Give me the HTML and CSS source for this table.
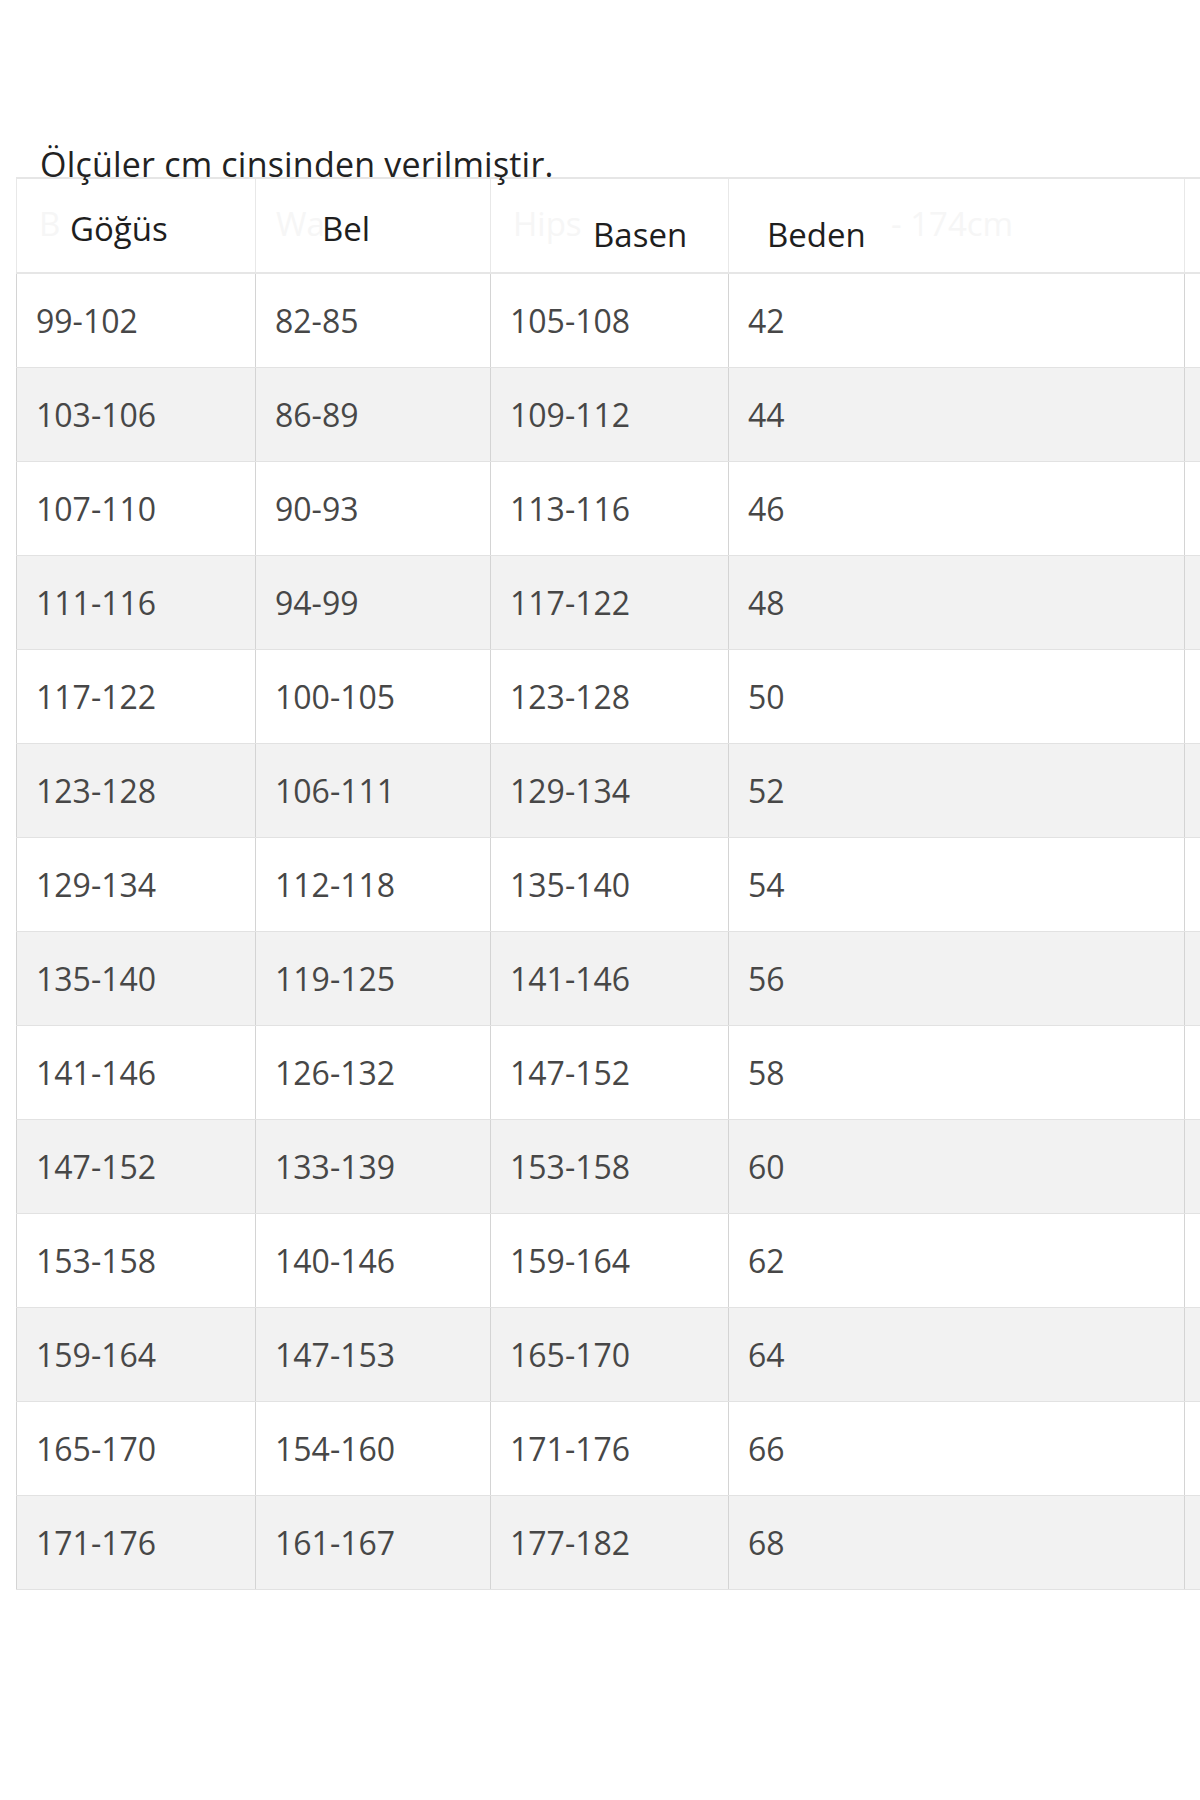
FILE: index.html
```html
<!DOCTYPE html>
<html lang="tr">
<head>
<meta charset="utf-8">
<title>Beden Tablosu</title>
<link rel="stylesheet" href="styles.css">
</head>
<body>
<div class="page">
  <p class="note">Ölçüler cm cinsinden verilmiştir.</p>
  <div class="table-wrap">
    <table class="size-table">
      <colgroup>
        <col class="c1"><col class="c2"><col class="c3"><col class="c4"><col class="c5">
      </colgroup>
      <thead>
        <tr>
          <th class="h1"><span class="ghost g1">B</span><span class="lbl">Göğüs</span></th>
          <th class="h2"><span class="ghost g2">Wa</span><span class="lbl">Bel</span></th>
          <th class="h3"><span class="ghost g3">Hips</span><span class="lbl">Basen</span></th>
          <th class="h4"><span class="lbl">Beden</span><span class="ghost g5">- 174cm</span></th>
          <th></th>
        </tr>
      </thead>
      <tbody>
        <tr><td>99-102</td><td>82-85</td><td>105-108</td><td>42</td><td></td></tr>
        <tr><td>103-106</td><td>86-89</td><td>109-112</td><td>44</td><td></td></tr>
        <tr><td>107-110</td><td>90-93</td><td>113-116</td><td>46</td><td></td></tr>
        <tr><td>111-116</td><td>94-99</td><td>117-122</td><td>48</td><td></td></tr>
        <tr><td>117-122</td><td>100-105</td><td>123-128</td><td>50</td><td></td></tr>
        <tr><td>123-128</td><td>106-111</td><td>129-134</td><td>52</td><td></td></tr>
        <tr><td>129-134</td><td>112-118</td><td>135-140</td><td>54</td><td></td></tr>
        <tr><td>135-140</td><td>119-125</td><td>141-146</td><td>56</td><td></td></tr>
        <tr><td>141-146</td><td>126-132</td><td>147-152</td><td>58</td><td></td></tr>
        <tr><td>147-152</td><td>133-139</td><td>153-158</td><td>60</td><td></td></tr>
        <tr><td>153-158</td><td>140-146</td><td>159-164</td><td>62</td><td></td></tr>
        <tr><td>159-164</td><td>147-153</td><td>165-170</td><td>64</td><td></td></tr>
        <tr><td>165-170</td><td>154-160</td><td>171-176</td><td>66</td><td></td></tr>
        <tr><td>171-176</td><td>161-167</td><td>177-182</td><td>68</td><td></td></tr>
      </tbody>
    </table>
  </div>
</div>
</body>
</html>
```

FILE: styles.css
```css
html, body {
  margin: 0;
  padding: 0;
  background: #ffffff;
}

body {
  font-family: "Open Sans", "Liberation Sans", sans-serif;
  overflow-x: hidden;
}

.page {
  padding-top: 141px;
  width: 1200px;
  overflow: hidden;
}

.note {
  margin: 0 0 0 40px;
  font-size: 34px;
  line-height: 46px;
  color: #222222;
  position: relative;
  z-index: 1;
  letter-spacing: 0.2px;
}

.table-wrap {
  margin-top: -10px;
  margin-left: 16px;
  width: 1184px;
  overflow: hidden;
}

.size-table {
  border-collapse: collapse;
  table-layout: fixed;
  width: 1400px;
}

.c1 { width: 239px; }
.c2 { width: 235px; }
.c3 { width: 238px; }
.c4 { width: 456px; }
.c5 { width: 232px; }

.size-table th,
.size-table td {
  height: 93px;
  padding: 0;
  border-left: 1px solid #d4d4d4;
  border-right: 1px solid #d4d4d4;
  border-bottom: 1px solid #e2e2e2;
  vertical-align: middle;
  text-align: left;
}

.size-table thead th {
  border-top: 2px solid #e6e6e6;
  border-bottom: 2px solid #e6e6e6;
  border-left-color: #e8e8e8;
  border-right-color: #e8e8e8;
  font-weight: 400;
  font-size: 33px;
  color: #1e1e1e;
  white-space: nowrap;
  position: relative;
}

.size-table td {
  font-size: 32px;
  color: #474747;
  padding-left: 19px;
}

.size-table tbody tr:nth-child(even) td {
  background: #f2f2f2;
}

.lbl {
  position: relative;
}

.ghost {
  position: absolute;
  color: #f6f6f6;
  top: 22px;
  font-size: 33px;
}

.h1 .lbl { margin-left: 53px; top: 3px; }
.h2 .lbl { margin-left: 66px; top: 3px; }
.h3 .lbl { margin-left: 102px; top: 9px; }
.h4 .lbl { margin-left: 38px; top: 9px; }

.g1 { left: 22px; }
.g2 { left: 20px; }
.g3 { left: 22px; }
.g5 { left: 162px; }
```
